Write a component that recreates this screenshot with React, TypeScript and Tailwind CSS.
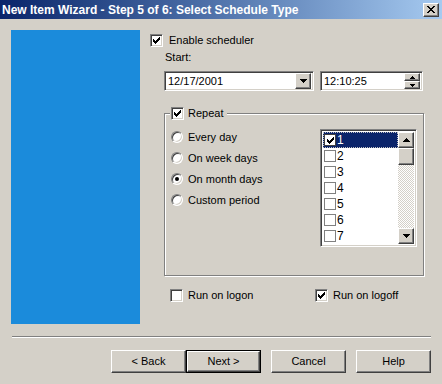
import React from "react";

const font = { fontFamily: '"Liberation Sans", Arial, sans-serif' };

function Check({ color = "#000" }: { color?: string }) {
  const cols = [2, 3, 4, 3, 2, 1, 0];
  return (
    <svg width="7" height="7" viewBox="0 0 7 7" shapeRendering="crispEdges">
      {cols.map((y, x) => (
        <rect key={x} x={x} y={y} width="1" height="3" fill={color} />
      ))}
    </svg>
  );
}

function CheckBox({ checked }: { checked?: boolean }) {
  return (
    <div className="w-[13px] h-[13px] shrink-0 bg-white border border-t-[#808080] border-l-[#808080] border-b-white border-r-white shadow-[inset_1px_1px_0_#404040,inset_-1px_-1px_0_#d4d0c8] flex items-center justify-center">
      {checked && <Check />}
    </div>
  );
}

function Radio({ checked }: { checked?: boolean }) {
  return (
    <div className="w-[12px] h-[12px] shrink-0 rounded-full bg-white border border-t-[#808080] border-l-[#808080] border-b-white border-r-white shadow-[inset_1px_1px_0_#404040,inset_-1px_-1px_0_#d4d0c8] flex items-center justify-center">
      {checked && <div className="w-[4px] h-[4px] rounded-full bg-black" />}
    </div>
  );
}

const raised =
  "border border-t-white border-l-white border-b-[#404040] border-r-[#404040] shadow-[inset_-1px_-1px_0_#808080,inset_1px_1px_0_#d4d0c8] bg-[#d4d0c8]";
const sunken =
  "border border-t-[#808080] border-l-[#808080] border-b-white border-r-white shadow-[inset_1px_1px_0_#404040,inset_-1px_-1px_0_#d4d0c8] bg-white";

function Tri({ down = true, w = 7 }: { down?: boolean; w?: number }) {
  const h = Math.ceil(w / 2);
  return (
    <svg width={w} height={h} viewBox={`0 0 ${w} ${h}`} shapeRendering="crispEdges">
      <polygon
        points={down ? `0,0 ${w},0 ${w / 2},${h}` : `${w / 2},0 ${w},${h} 0,${h}`}
        fill="#000"
      />
    </svg>
  );
}

function Button({ label, def }: { label: string; def?: boolean }) {
  const inner = (
    <div className={`${raised} w-full h-full flex items-center justify-center text-[11px] text-black`}>
      {label}
    </div>
  );
  return (
    <div className={`w-[75px] h-[23px] ${def ? "border border-black" : ""}`}>{inner}</div>
  );
}

export default function App() {
  const items = [1, 2, 3, 4, 5, 6, 7];
  return (
    <div className="w-[442px] h-[384px] bg-[#d4d0c8] flex flex-col overflow-hidden" style={font}>
      {/* title bar */}
      <div className="h-[19px] flex items-center bg-gradient-to-r from-[#0a246a] to-[#a6caf0] pl-[2px] pr-[3px]">
        <div className="flex-1 text-white font-bold text-[12px] leading-none whitespace-nowrap">
          New Item Wizard - Step 5 of 6: Select Schedule Type
        </div>
        <div className={`${raised} w-[16px] h-[14px] flex items-center justify-center`}>
          <svg width="8" height="7" viewBox="0 0 8 7" shapeRendering="crispEdges">
            <path d="M0 0h2l2 2.5L6 0h2L5 3.5 8 7H6L4 4.5 2 7H0l3-3.5z" fill="#000" />
          </svg>
        </div>
      </div>

      {/* body */}
      <div className="flex h-[317px]">
        <div className="ml-[11px] mt-[11px] w-[129px] h-[294px] bg-[#1b8bdb]" />
        <div className="ml-[10px] pt-[15px] flex flex-col text-[11px] text-black">
          <div className="flex items-center h-[13px]">
            <CheckBox checked />
            <span className="ml-[6px]">Enable scheduler</span>
          </div>
          <div className="ml-[15px] mt-[4px] h-[13px] leading-[13px]">Start:</div>
          <div className="ml-[14px] mt-[7px] flex">
            <div className={`${sunken} w-[150px] h-[20px] flex items-center pl-[3px] pr-[2px]`}>
              <span className="flex-1">12/17/2001</span>
              <div className={`${raised} w-[16px] h-[16px] flex items-center justify-center`}>
                <Tri w={7} />
              </div>
            </div>
            <div className={`${sunken} ml-[6px] w-[103px] h-[20px] flex items-center pl-[3px] pr-[2px]`}>
              <span className="flex-1">12:10:25</span>
              <div className="flex flex-col w-[16px] h-[16px]">
                <div className={`${raised} h-[8px] flex items-center justify-center`}>
                  <Tri down={false} w={5} />
                </div>
                <div className={`${raised} h-[8px] flex items-center justify-center`}>
                  <Tri w={5} />
                </div>
              </div>
            </div>
          </div>

          {/* group box */}
          <div className="relative ml-[14px] mt-[22px] w-[260px] h-[163px] border border-[#808080] shadow-[1px_1px_0_#fff,inset_1px_1px_0_#fff]">
            <div className="absolute left-[5px] top-[-7px] flex items-center bg-[#d4d0c8] pl-[1px] pr-[4px] h-[13px]">
              <CheckBox checked />
              <span className="ml-[4px]">Repeat</span>
            </div>
            <div className="flex pl-[6px] pt-[17px]">
              <div className="w-[149px] flex flex-col gap-[9px]">
                {[
                  ["Every day", false],
                  ["On week days", false],
                  ["On month days", true],
                  ["Custom period", false],
                ].map(([l, c]) => (
                  <div key={l as string} className="flex items-center h-[12px]">
                    <Radio checked={c as boolean} />
                    <span className="ml-[5px]">{l as string}</span>
                  </div>
                ))}
              </div>
              {/* listbox */}
              <div className={`${sunken} -mt-[2px] w-[97px] h-[118px] p-[2px] flex overflow-hidden`}>
                <div className="flex-1 flex flex-col">
                  {items.map((n) => (
                    <div
                      key={n}
                      className={`h-[16px] flex items-center shrink-0 ${
                        n === 1 ? "bg-[#0a246a] text-white outline-1 outline-dotted outline-[#c0c0c0] -outline-offset-1" : ""
                      }`}
                    >
                      <div
                        className={`ml-[1px] w-[12px] h-[12px] flex items-center justify-center border ${
                          n === 1 ? "border-[#404040] bg-white" : "border-[#808080]"
                        }`}
                      >
                        {n === 1 && <Check />}
                      </div>
                      <span className="ml-[1px] leading-none text-[12px]">{n}</span>
                    </div>
                  ))}
                </div>
                <div className="w-[16px] flex flex-col">
                  <div className={`${raised} h-[16px] flex items-center justify-center`}>
                    <Tri down={false} w={7} />
                  </div>
                  <div className={`${raised} h-[17px]`} />
                  <div className="flex-1 bg-[repeating-conic-gradient(#d4d0c8_0%_25%,#ffffff_0%_50%)] bg-[length:2px_2px]" />
                  <div className={`${raised} h-[16px] flex items-center justify-center`}>
                    <Tri w={7} />
                  </div>
                </div>
              </div>
            </div>
          </div>

          <div className="flex mt-[11px] ml-[20px]">
            <div className="flex items-center w-[145px]">
              <CheckBox />
              <span className="ml-[5px]">Run on logon</span>
            </div>
            <div className="flex items-center">
              <CheckBox checked />
              <span className="ml-[5px]">Run on logoff</span>
            </div>
          </div>
        </div>
      </div>

      {/* separator */}
      <div className="ml-[12px] w-[419px] h-[2px] border-t border-t-[#808080] border-b border-b-white" />

      {/* buttons */}
      <div className="flex mt-[12px] pl-[111px]">
        <Button label="< Back" />
        <Button label="Next >" def />
        <div className="ml-[10px]">
          <Button label="Cancel" />
        </div>
        <div className="ml-[10px]">
          <Button label="Help" />
        </div>
      </div>
    </div>
  );
}
